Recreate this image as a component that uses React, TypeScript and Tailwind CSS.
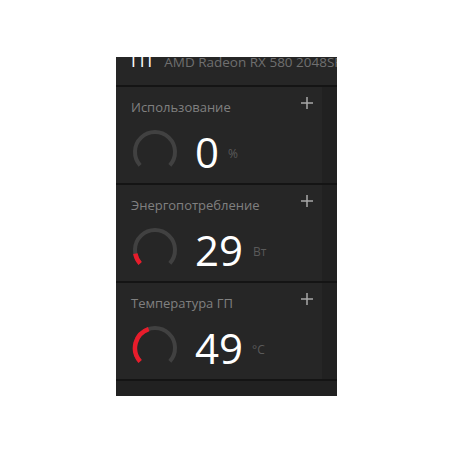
import { useMemo } from "react";

type Metric = { title: string; value: string; unit: string; percent: number; unitGap: string };

const metrics: Metric[] = [
  { title: "Использование", value: "0", unit: "%", percent: 0, unitGap: "ml-[9px]" },
  { title: "Энергопотребление", value: "29", unit: "Вт", percent: 0.12, unitGap: "ml-[10px]" },
  { title: "Температура ГП", value: "49", unit: "°C", percent: 0.43, unitGap: "ml-[9px]" },
];

function polar(angle: number, r: number) {
  const a = (angle * Math.PI) / 180;
  return [24 + r * Math.cos(a), 24 + r * Math.sin(a)];
}

function arc(from: number, to: number, r: number) {
  const [x1, y1] = polar(from, r);
  const [x2, y2] = polar(to, r);
  const large = to - from > 180 ? 1 : 0;
  return `M${x1} ${y1}A${r} ${r} 0 ${large} 1 ${x2} ${y2}`;
}

function Gauge({ percent }: { percent: number }) {
  const start = 138;
  const sweep = 264;
  const track = useMemo(() => arc(start, start + sweep, 20), []);
  return (
    <svg width="48" height="48" viewBox="0 0 48 48" fill="none" className="shrink-0">
      <path d={track} stroke="#414141" strokeWidth="4" />
      {percent > 0 && <path d={arc(start, start + sweep * percent, 20)} stroke="#e81c2b" strokeWidth="4.5" />}
    </svg>
  );
}

function MetricCard({ metric }: { metric: Metric }) {
  return (
    <div className="flex h-[98px] border-b-2 border-[#141414] bg-[#212121]">
      <div className="relative w-[206px] shrink-0 bg-[#262626] pl-[15px]">
        <div className="pt-[11px] text-[13px] font-medium leading-[18px] text-[#808080]">{metric.title}</div>
        <svg width="14" height="14" viewBox="0 0 14 14" className="absolute left-[184px] top-[9px]">
          <path d="M7 1v12M1 7h12" stroke="#a8a8a8" strokeWidth="1.5" />
        </svg>
        <div className="mt-[11px] flex items-center">
          <Gauge percent={metric.percent} />
          <div className="ml-[16px] text-[42px] font-normal leading-[50px] text-white">{metric.value}</div>
          <div className={`${metric.unitGap} mt-[4px] text-[12px] text-[#5a5a5a]`}>{metric.unit}</div>
        </div>
      </div>
    </div>
  );
}

export default function App() {
  return (
    <div className="h-[452px] w-[452px] bg-white pl-[116px] pt-[57px] font-['Open_Sans','Noto_Sans',sans-serif]">
      <div className="flex h-[339px] w-[221px] flex-col overflow-hidden bg-[#212121]">
        <div className="flex h-[30px] shrink-0 items-start overflow-hidden whitespace-nowrap border-b-2 border-[#141414] bg-[#262626] pl-[15px]">
          <span className="-mt-[8px] text-[17px] font-medium leading-[24px] text-white">ГП</span>
          <span className="ml-[12px] text-[13.5px] leading-[10px] text-[#6f6f6f]">AMD Radeon RX 580 2048SP</span>
        </div>
        <div className="min-h-0 flex-1">
          {metrics.map((m) => (
            <MetricCard key={m.title} metric={m} />
          ))}
        </div>
      </div>
    </div>
  );
}
